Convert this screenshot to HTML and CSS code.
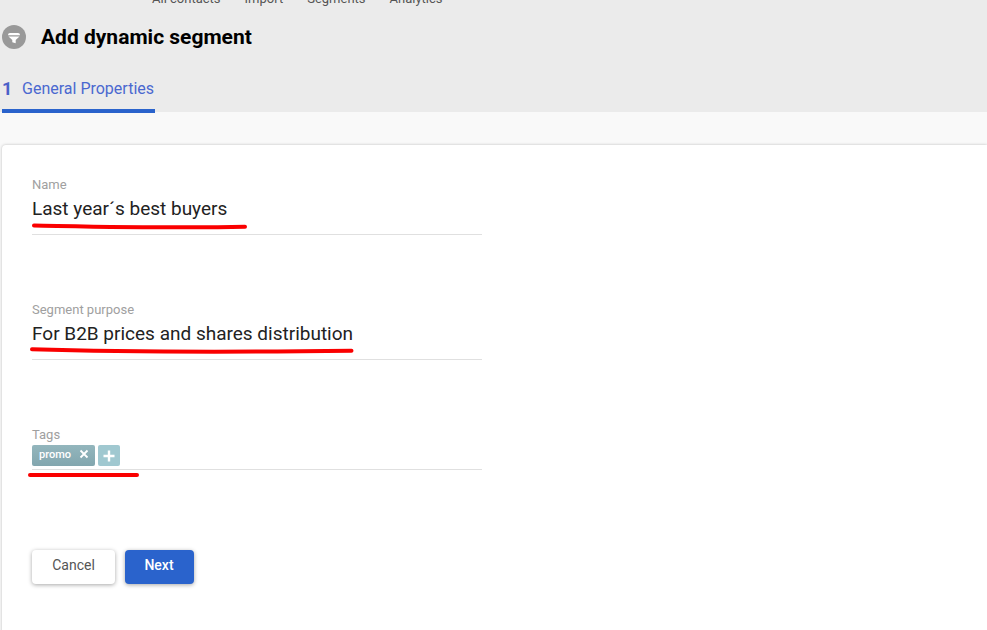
FILE: index.html
```html
<!DOCTYPE html>
<html lang="en">
<head>
<meta charset="utf-8">
<title>Add dynamic segment</title>
<link rel="stylesheet" href="styles.css">
</head>
<body>
<header class="top">
  <nav class="subnav">
    <a>All contacts</a><a>Import</a><a>Segments</a><a>Analytics</a>
  </nav>
  <div class="title-row">
    <span class="title-icon">
      <svg viewBox="0 0 24 24" width="24" height="24"><path d="M8 8h8a2 2 0 0 1 2 2v.3H6V10a2 2 0 0 1 2-2z M6.500 11.500h11l-3.800 3.400v3.400l-3.400-1v-2.400z" fill="#fff"/></svg>
    </span>
    <h1>Add dynamic segment</h1>
  </div>
  <div class="tabs">
    <div class="tab"><span class="tab-num">1</span><span class="tab-label">General Properties</span></div>
  </div>
</header>
<main class="content">
  <section class="card">
    <div class="field field-first">
      <div class="label">Name</div>
      <div class="value">Last year´s best buyers</div>
    </div>
    <div class="field">
      <div class="label">Segment purpose</div>
      <div class="value">For B2B prices and shares distribution</div>
    </div>
    <div class="field field-tags">
      <div class="label">Tags</div>
      <div class="tags">
        <span class="tag">promo<svg class="tag-x" viewBox="0 0 10 10" width="10" height="10"><path d="M1.500 1.500l7 7M8.500 1.500l-7 7" stroke="#fff" stroke-width="1.800" fill="none"/></svg></span>
        <span class="tag-add"><svg viewBox="0 0 12 12" width="12" height="12"><path d="M6 .5v11M.5 6h11" stroke="#fff" stroke-width="2.400" fill="none"/></svg></span>
      </div>
    </div>
    <div class="actions">
      <button class="btn btn-cancel">Cancel</button>
      <button class="btn btn-next">Next</button>
    </div>
  </section>
</main>
<svg class="marks" width="987" height="630" viewBox="0 0 987 630">
  <g fill="none" stroke="#fa0000" stroke-width="4" stroke-linecap="round">
    <path d="M34 225.500C90 226.500 170 228.500 245 226.800"/>
    <path d="M32 349.300C120 352 250 352 351.500 350.800"/>
    <path d="M30 475H137"/>
  </g>
</svg>
</body>
</html>
```

FILE: styles.css
```css
* { box-sizing: border-box; }
html, body { margin: 0; padding: 0; height: 630px; overflow: hidden; }
body { position: relative; font-family: Roboto, "Liberation Sans", sans-serif; background: #f9f9f9; color: #111; }

.top { height: 112px; background: #ebebeb; }
.subnav { display: flex; gap: 24px; height: 5px; padding-left: 152px; font-size: 13px; line-height: 15px; color: #555; }
.subnav a { display: block; margin-top: -9px; }
.title-row { display: flex; align-items: center; gap: 15px; height: 24px; margin-top: 20px; padding-left: 2px; }
.title-icon { width: 24px; height: 24px; border-radius: 50%; background: #999; display: flex; }
h1 { margin: 0; font-size: 21px; line-height: 24px; font-weight: 700; color: #000; }
.tabs { display: flex; margin-top: 27px; padding-left: 2px; }
.tab { position: relative; height: 36px; width: 153px; display: flex; align-items: flex-start; padding-top: 3px; }
.tab-num { font-size: 18px; line-height: 20px; font-weight: 700; color: #4a60c8; width: 20px; }
.tab-label { font-size: 16px; line-height: 20px; color: #4a68d0; }
.tab::after { content: ""; position: absolute; left: 0; right: 0; top: 33px; height: 4px; background: #2a63cc; }

.content { padding: 33px 0 0 2px; }
.card { height: 500px; background: #fff; border-radius: 4px 0 0 0; box-shadow: 0 0 3px rgba(0,0,0,.25); padding: 33px 30px 0; }
.field { width: 450px; height: 57px; border-bottom: 1px solid #e0e0e0; margin-bottom: 68px; }
.label { font-size: 13px; line-height: 14px; color: #a0a0a0; }
.value { font-size: 19px; line-height: 24px; margin-top: 5px; color: #222; }
.tags { display: flex; gap: 3px; margin-top: 3px; }
.tag { display: flex; align-items: center; justify-content: space-between; width: 63px; height: 21px; padding: 0 6px 3px 7px; border-radius: 2px; background: linear-gradient(#93b6bd, #82a6ae); color: #fff; font-size: 11px; font-weight: 500; }
.tag-x { display: block; }
.tag-add { display: flex; align-items: center; justify-content: center; width: 22px; height: 21px; border-radius: 2px; background: #a0c8d0; }
.field-tags { height: 42px; margin-bottom: 80px; }
.actions { display: flex; gap: 10px; }
.btn { height: 34px; border: 0; border-radius: 4px; font-family: inherit; font-size: 14px; padding: 0 0 4px; box-shadow: 0 1px 4px rgba(0,0,0,.35); }
.btn-cancel { width: 83px; background: #fff; color: #555; }
.btn-next { width: 69px; background: #2a63cc; color: #fff; font-weight: 500; padding-right: 1px; }

.marks { position: absolute; left: 0; top: 0; pointer-events: none; }
```
